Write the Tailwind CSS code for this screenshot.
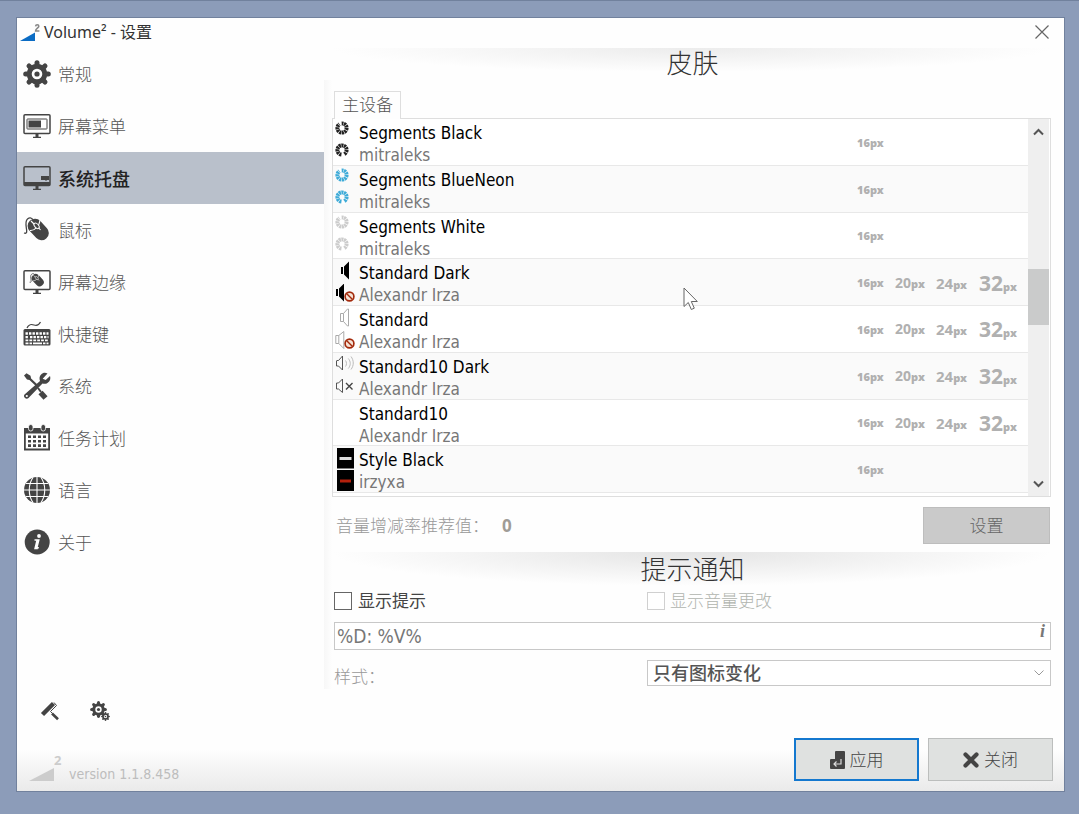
<!DOCTYPE html>
<html lang="zh-CN">
<head>
<meta charset="utf-8">
<title>Volume² - 设置</title>
<script src="https://cdn.jsdelivr.net/npm/@tailwindcss/browser@4"></script>
</head>
<body class="flex min-h-screen border-t border-[#71819d] bg-[#8c9cb9] pt-4 pr-[14px] pb-[22px] pl-4 font-['Noto_Sans','Noto_Sans_CJK_SC',sans-serif] text-[17px] leading-6 text-[#555]">

<svg class="hidden" aria-hidden="true">
  <symbol id="gear" viewBox="-14 -14 28 28">
    <circle r="7.8" fill="none" stroke="currentColor" stroke-width="5"/>
    <circle r="2.6" fill="currentColor"/>
    <g stroke="currentColor" stroke-width="5" stroke-linecap="round">
      <path id="tooth" d="M0-9V-11.3"/>
      <use href="#tooth" transform="rotate(45)"/><use href="#tooth" transform="rotate(90)"/><use href="#tooth" transform="rotate(135)"/><use href="#tooth" transform="rotate(180)"/><use href="#tooth" transform="rotate(225)"/><use href="#tooth" transform="rotate(270)"/><use href="#tooth" transform="rotate(315)"/>
    </g>
  </symbol>
  <symbol id="mouse" viewBox="0 0 28 28">
    <path d="M1 17c3 1 3-1 2.500-4S2 5 4.500 3 8 2 10 3.500" fill="none" stroke="currentColor" stroke-width="1.300"/>
    <rect x="8" y="1.500" width="14.500" height="24" rx="7" transform="rotate(-43 15.200 13.500)" fill="currentColor"/>
    <path d="M7 14.500c4 .5 9.500-4 10-10.500M8 5l4 4M15 11l2.500 3" fill="none" stroke="#fff" stroke-width="1.100"/>
    <ellipse cx="13.600" cy="9.800" rx="1.900" ry="3.300" transform="rotate(-43 13.600 9.800)" fill="currentColor" stroke="#fff"/>
  </symbol>
  <symbol id="screen" viewBox="0 0 28 28">
    <rect x="1" y="2.800" width="26" height="18.600" rx="1" fill="none" stroke="currentColor" stroke-width="1.500"/>
    <path d="M12.500 21.500h3v3.300h2.500v1.200h-8v-1.200h2.500z" fill="currentColor"/>
  </symbol>
  <symbol id="seg-up" viewBox="0 0 14 14">
    <circle cx="7" cy="7" r="4.600" fill="none" stroke="currentColor" stroke-width="4" stroke-dasharray="2.100 .528" pathLength="28.900"/>
    <path d="M6.500 6 1.500-1h5z" fill="#fff"/>
  </symbol>
  <symbol id="seg-down" viewBox="0 0 14 14">
    <circle cx="7" cy="7" r="4.600" fill="none" stroke="currentColor" stroke-width="4" stroke-dasharray="2.100 .528" pathLength="28.900"/>
    <path d="m7.200 8 4.300 7h-5z" fill="#fff"/>
  </symbol>
  <symbol id="ban" viewBox="0 0 12 12">
    <circle cx="6" cy="6" r="4.800" fill="#f5e3d6" stroke="#a32a0c" stroke-width="1.800"/>
    <path d="m3 3 6 6" stroke="#a32a0c" stroke-width="1.600"/>
  </symbol>
</svg>

<div class="flex flex-1 flex-col border border-[#71819d] bg-linear-to-t from-[#eaeaea] to-[#fefefe] to-[42px]">
  <header class="flex h-[30px] shrink-0 items-center pr-[15px] pb-[2px] pl-[3px]">
    <svg class="h-6 w-[21px] shrink-0" viewBox="0 0 21 24">
      <path d="M0 21 15 12.500V21z" fill="#0b6cc4"/>
      <path d="M15.600 6.300c.2-2 3.200-2 3.200 0 0 1.800-3.200 2.200-3.200 4.700h3.800" fill="none" stroke="#888" stroke-width="1.600"/>
    </svg>
    <h1 class="ml-[3px] flex-1 text-[16px] text-[#333]">Volume² - 设置</h1>
    <button type="button" aria-label="关闭窗口" class="text-[#666]">
      <svg class="size-[14px]" viewBox="0 0 14 14"><path d="M.5.5l13 13m0-13-13 13" fill="none" stroke="currentColor" stroke-width="1.200"/></svg>
    </button>
  </header>

  <div class="flex flex-1">
    <aside class="flex w-[307px] shrink-0 flex-col text-[#444]">
      <nav class="flex flex-col text-[17px] [&>a]:flex [&>a]:h-[52px] [&>a]:items-center [&>a]:gap-[7px] [&>a]:pl-[6px] [&_span]:pt-[2px] [&_span]:font-light [&_span]:text-[#555] [&_svg]:size-7">
        <a href="#general"><svg><use href="#gear"/></svg><span>常规</span></a>
        <a href="#osd">
          <svg viewBox="0 0 28 28"><use href="#screen"/><rect x="4" y="7" width="20" height="10" rx=".5" fill="none" stroke="currentColor" stroke-width="1"/><path d="M5.500 8.500H18v7H5.500z" fill="currentColor"/></svg>
          <span>屏幕菜单</span></a>
        <a href="#tray" aria-current="page" class="bg-[#b9c0cb]">
          <svg viewBox="0 0 28 28"><use href="#screen"/><path d="M1 18h26v3H1zM18 12h8v4h-2l-1 1-1-1h-4z" fill="currentColor"/></svg>
          <strong class="pt-[2px] text-[18px] font-medium text-[#222]">系统托盘</strong></a>
        <a href="#mouse-page"><svg><use href="#mouse"/></svg><span>鼠标</span></a>
        <a href="#edges">
          <svg viewBox="0 0 28 28"><use href="#screen"/><use href="#mouse" x="6" y="4.500" width="16" height="16"/></svg>
          <span>屏幕边缘</span></a>
        <a href="#hotkeys">
          <svg viewBox="0 0 28 28">
            <path d="M4 8c2-4 4-4 7-3s5 0 6.500-3" fill="none" stroke="currentColor" stroke-width="1.200"/>
            <rect x=".5" y="9" width="27" height="16.500" rx="1.500" fill="currentColor"/>
            <path d="M2.500 13.500h23" stroke="#fff" stroke-width="2.400" stroke-dasharray="2.400 1.100"/>
            <path d="M2.500 17.200h3.500m1 0h18.500" stroke="#fff" stroke-width="2.200" stroke-dasharray="2.400 1.100"/>
            <path d="M2.500 20.400h23" stroke="#fff" stroke-width="1.800" stroke-dasharray="2.800 1.100"/>
            <path d="M2.500 23.300h3m1 0h2.500m1 0h9m1 0h2.500m1 0h2" stroke="#fff" stroke-width="1.800"/>
          </svg>
          <span>快捷键</span></a>
        <a href="#system">
          <svg viewBox="0 0 28 28">
            <path d="M1 3.500 3.500 1.300l4 2.500.6 2.700L15 13l-1.600 1.500L6.500 8 4 7.500z" fill="currentColor"/>
            <path d="m17.500 20.500 5 5.500" stroke="currentColor" stroke-width="5.500"/>
            <path d="m15 16 3 4" stroke="currentColor" stroke-width="2"/>
            <path d="M24.500 1.500C20-1 15 3.500 17 9L1.500 22.500c-1 1.200-.5 2.500.5 3.500s2.500 1 3.500 0L19.500 11.500c5 1.500 9-3 7.500-7.500l-4.300 4-3-1.300z" fill="currentColor"/>
            <circle cx="3.800" cy="24" r="1.100" fill="#fff"/>
          </svg>
          <span>系统</span></a>
        <a href="#schedule">
          <svg viewBox="0 0 28 28">
            <path d="M1 4h26v22.500H1z" fill="currentColor"/><path d="M2.800 9.500h22.400v15H2.800z" fill="#fefefe"/>
            <path d="M5 12.800h19M5 17.200h19M5 21.600h19" stroke="currentColor" stroke-width="2.600" stroke-dasharray="3 2"/>
            <rect x="5.500" y=".5" width="4.500" height="6.500" rx="2.200" fill="currentColor" stroke="#fefefe" stroke-width=".8"/><rect x="18" y=".5" width="4.500" height="6.500" rx="2.200" fill="currentColor" stroke="#fefefe" stroke-width=".8"/>
          </svg>
          <span>任务计划</span></a>
        <a href="#language">
          <svg viewBox="0 0 28 28"><circle cx="14" cy="14" r="13" fill="currentColor"/>
            <path d="M14 1v26M1 14h26M3 7.500h22M3 20.500h22M10 1.500c-5 7-5 18 0 25M18 1.500c5 7 5 18 0 25" fill="none" stroke="#fefefe" stroke-width="1.100"/></svg>
          <span>语言</span></a>
        <a href="#about">
          <svg viewBox="0 0 28 28"><circle cx="14.200" cy="14" r="12.500" fill="currentColor"/>
            <circle cx="16" cy="8" r="1.900" fill="#fff"/><path d="M11.500 12h4.300l-2 7.800h2" fill="none" stroke="#fff" stroke-width="1.500"/><path d="m14.500 12-2 8.200h2.300" fill="none" stroke="#fff" stroke-width="2.200"/></svg>
          <span>关于</span></a>
      </nav>

      <div class="mt-auto flex gap-[30px] pl-[23px]">
        <button type="button" aria-label="皮肤">
          <svg class="size-5" viewBox="0 0 20 20"><path d="m2.500 13.500 11-11" stroke="currentColor" stroke-width="4.500"/><path d="m14 1.500 2.500 3-6 6 2 2" fill="none" stroke="currentColor"/><path d="m12 12.500 6 5.800" stroke="currentColor" stroke-width="2.600"/></svg>
        </button>
        <button type="button" aria-label="高级设置">
          <svg class="size-5" viewBox="0 0 20 20"><use href="#gear" width="17" height="17"/><use href="#gear" x="11" y="11" width="9" height="9"/></svg>
        </button>
      </div>

      <div class="mt-[27px] flex h-[43px] items-end pb-[5px] pl-[12px] text-[#bdbdbd]">
        <svg class="mb-[5px] h-[13px] w-[25px]" viewBox="0 0 25 13"><path d="M0 13 25 0v13z" fill="#ccc"/></svg>
        <sup class="top-0 w-[15px] self-start text-[13px] leading-6 font-bold text-[#ccc]">2</sup>
        <span class="font-['DejaVu_Sans_Condensed','Noto_Sans',sans-serif] text-[14px]">version 1.1.8.458</span>
      </div>
    </aside>

    <main class="flex min-w-0 flex-1 flex-col pr-[13px]">
      <div class="flex">
        <div class="mt-8 w-2 shrink-0 bg-linear-to-r from-[#f7f7f7] to-transparent"></div>
        <div class="min-w-0 flex-1">
          <section>
            <h2 class="h-[43px] bg-[radial-gradient(ellipse_50%_24px_at_50%_0,#ececec,transparent)] pl-[2px] text-center text-[26px] leading-[30px] font-light text-[#333]">皮肤</h2>
            <div role="tablist" class="flex pl-[2px]">
              <button type="button" role="tab" aria-selected="true" class="z-10 -mb-px h-7 border border-b-0 border-[#dedede] bg-[#fefefe] px-[7px] pb-[2px] text-[17px] font-light text-[#555]">主设备</button>
            </div>
            <div class="flex h-[379px] border border-[#dedede] bg-white">
              <div class="min-w-0 flex-1 overflow-hidden">
                <ul class="grid h-[374px] grid-rows-8 [&_b]:text-[11px] [&_b]:leading-none [&_p]:font-['DejaVu_Sans_Condensed','Noto_Sans',sans-serif] [&_p]:text-[17px] [&_p]:leading-[22px] [&>li]:flex [&>li]:min-h-0 [&>li]:border-b [&>li]:border-[#e8e8e8] [&>li:nth-child(even)]:bg-[#fafafa] [&>li>div:first-child]:flex [&>li>div:first-child]:w-[26px] [&>li>div:first-child]:flex-col [&>li>div:first-child]:pt-[2px] [&>li>div:first-child]:pl-[2px] [&>li>div:nth-child(2)]:flex-1 [&>li>div:nth-child(2)]:pt-[3px] [&>li>div:nth-child(3)]:grid [&>li>div:nth-child(3)]:grid-cols-[38px_41px_43px_49px] [&>li>div:nth-child(3)]:items-center [&>li>div:nth-child(3)]:pt-px [&>li>div:nth-child(3)]:font-bold [&>li>div:nth-child(3)]:text-[#b0b0b0] [&_p:first-child]:text-black [&_p:last-child]:text-[#777]">
                  <li>
                    <div class="gap-2 text-[#222]"><svg class="size-[14px]"><use href="#seg-up"/></svg><svg class="size-[14px]"><use href="#seg-down"/></svg></div>
                    <div><p>Segments Black</p><p>mitraleks</p></div>
                    <div><b>16px</b></div>
                  </li>
                  <li>
                    <div class="gap-2 text-[#3eabd8]"><svg class="size-[14px]"><use href="#seg-up"/></svg><svg class="size-[14px]"><use href="#seg-down"/></svg></div>
                    <div><p>Segments BlueNeon</p><p>mitraleks</p></div>
                    <div><b>16px</b></div>
                  </li>
                  <li>
                    <div class="gap-2 text-[#ccc]"><svg class="size-[14px]"><use href="#seg-up"/></svg><svg class="size-[14px]"><use href="#seg-down"/></svg></div>
                    <div><p>Segments White</p><p>mitraleks</p></div>
                    <div><b>16px</b></div>
                  </li>
                  <li>
                    <div class="gap-1"><svg class="h-[19px] w-5" viewBox="0 0 20 19"><path d="M6 6h2v7H6zM9 5.500l5-5v18l-5-5z" fill="#000"/></svg><svg class="h-[19px] w-5" viewBox="0 0 20 19"><path d="M1 5h2v7H1zM4 4.500l5-5v18l-5-5z" fill="#000"/><use href="#ban" x="9" y="7" width="11" height="11"/></svg></div>
                    <div><p>Standard Dark</p><p>Alexandr Irza</p></div>
                    <div><b>16px</b><span class="text-[14px]">20<b>px</b></span><span class="text-[15px]">24<b>px</b></span><span class="text-[21px]">32<b>px</b></span></div>
                  </li>
                  <li>
                    <div class="gap-1"><svg class="h-[19px] w-5" viewBox="0 0 20 19"><path d="M5.500 5.500h3v8h-3zM8.500 5.500l4-4.500h1v17h-1l-4-4.500" fill="none" stroke="#aaa"/></svg><svg class="h-[19px] w-5" viewBox="0 0 20 19"><path d="M.8 4.500h3v8h-3zM3.800 4.500l5-4v17l-5-5" fill="none" stroke="#aaa"/><use href="#ban" x="9" y="7" width="11" height="11"/></svg></div>
                    <div><p>Standard</p><p>Alexandr Irza</p></div>
                    <div><b>16px</b><span class="text-[14px]">20<b>px</b></span><span class="text-[15px]">24<b>px</b></span><span class="text-[21px]">32<b>px</b></span></div>
                  </li>
                  <li>
                    <div class="gap-[7px]"><svg class="h-4 w-5" viewBox="0 0 20 16"><path d="M1.500 6v5M1.500 5.500h2l4-4.500v14l-4-4h-2" fill="none" stroke="#555"/><path d="M10.500 5.500c1.300 1.500 1.300 4.500 0 6m2.800-8c2.600 3 2.600 7 0 10m2.700-12c3 4 3 9 0 13" fill="none" stroke="#bbb"/></svg><svg class="h-4 w-5" viewBox="0 0 20 16"><path d="M1.500 5v6M1.500 5h2l4-4v13.500L3.500 11h-2" fill="none" stroke="#555"/><path d="m11 5 6.500 6.500m0-6.500L11 11.500" stroke="#444" stroke-width="1.400"/></svg></div>
                    <div><p>Standard10 Dark</p><p>Alexandr Irza</p></div>
                    <div><b>16px</b><span class="text-[14px]">20<b>px</b></span><span class="text-[15px]">24<b>px</b></span><span class="text-[21px]">32<b>px</b></span></div>
                  </li>
                  <li>
                    <div></div>
                    <div><p>Standard10</p><p>Alexandr Irza</p></div>
                    <div><b>16px</b><span class="text-[14px]">20<b>px</b></span><span class="text-[15px]">24<b>px</b></span><span class="text-[21px]">32<b>px</b></span></div>
                  </li>
                  <li>
                    <div><svg class="h-[43px] w-5" viewBox="0 0 20 43"><path d="M2 0h17v20.500H2zM2 22h17v21H2z" fill="#000"/><path d="M4.500 9h12v3h-12z" fill="#ddd"/><path d="M5 31.500h11v3H5z" fill="#b3200c"/></svg></div>
                    <div><p>Style Black</p><p>irzyxa</p></div>
                    <div><b>16px</b></div>
                  </li>
                </ul>
              </div>
              <div class="mr-px flex w-[21px] shrink-0 flex-col items-center bg-[#efefef] text-[#555]">
                <button type="button" aria-label="向上滚动" class="flex h-[26px] w-full items-center justify-center"><svg class="h-2 w-[11px]" viewBox="0 0 11 8"><path d="m1 6.500 4.500-4.500L10 6.500" fill="none" stroke="currentColor" stroke-width="2"/></svg></button>
                <div class="mt-[124px] h-14 w-full bg-[#cacbcb]"></div>
                <button type="button" aria-label="向下滚动" class="mt-auto flex h-6 w-full items-center justify-center"><svg class="h-2 w-[11px]" viewBox="0 0 11 8"><path d="m1 1.500 4.500 4.500L10 1.500" fill="none" stroke="currentColor" stroke-width="2"/></svg></button>
              </div>
            </div>
            <div class="flex items-center py-[10px] pr-px pb-2 pl-1 text-[#b0b0b0]">
              <span class="font-light text-[#999]">音量增减率推荐值：</span>
              <output class="ml-[13px] font-bold text-[#a09c96]">0</output>
              <button type="button" disabled class="ml-auto h-[37px] w-[127px] border border-[#bdbdbd] bg-[#cacaca] font-light text-[#666]">设置</button>
            </div>
          </section>

          <section>
            <h2 class="h-10 bg-[radial-gradient(ellipse_50%_34px_at_50%_0,#e4e4e4,transparent)] pl-[2px] text-center text-[26px] leading-[35px] font-light text-[#333]">提示通知</h2>
            <div class="grid grid-cols-[313px_1fr] pl-[2px] leading-[18px] text-[#444]">
              <label class="flex items-center gap-[6px]"><input type="checkbox" class="size-[18px] appearance-none border border-[#666] bg-white">显示提示</label>
              <label class="flex items-center gap-[5px] font-light text-[#b0b4ae]"><input type="checkbox" disabled class="size-[18px] appearance-none border border-[#d0d0d0] bg-white">显示音量更改</label>
            </div>
            <div class="mt-3 ml-[2px] flex h-7 border border-[#c8c8c8] bg-white">
              <input type="text" aria-label="提示格式" value="%D: %V%" class="min-w-0 flex-1 pl-[2px] font-['DejaVu_Sans_Condensed','Noto_Sans',sans-serif] text-[19px] text-[#777] outline-none">
              <button type="button" aria-label="格式说明" class="self-start pr-[5px] font-['Liberation_Serif',serif] text-[18px] leading-[17px] font-bold text-[#777] italic">i</button>
            </div>
            <div class="mt-[10px] grid grid-cols-[313px_1fr] pl-[2px]">
              <label for="style" class="pt-[5px] font-light text-[#999]">样式：</label>
              <div class="relative">
                <select id="style" class="h-[26px] w-full appearance-none border border-[#c8c8c8] bg-white pl-[5px] text-[18px] font-medium text-[#555]"><option>只有图标变化</option></select>
                <svg class="pointer-events-none absolute top-[10px] right-[7px] h-[6px] w-[10px]" viewBox="0 0 10 6"><path d="m.5.5L5 5 9.500.5" fill="none" stroke="#999"/></svg>
              </div>
            </div>
          </section>
        </div>
      </div>

      <div class="-mr-[2px] mt-auto flex justify-end gap-[9px] pb-[10px] font-light text-[#444]">
        <button type="button" class="flex h-[43px] w-[125px] items-center justify-center gap-[5px] border-2 border-[#1478cf] bg-[#dfe1e0]">
          <svg class="h-[18px] w-[15px]" viewBox="0 0 15 18"><path d="M6 0h8q1 0 1 1v16q0 1-1 1H1q-1 0-1-1V9q0-1 1-1h4V1q0-1 1-1z" fill="#444"/><path d="M11 8v5H4m2.500-2.500L4 13l2.500 2.500" fill="none" stroke="#ddd" stroke-width="1.200"/></svg>应用</button>
        <button type="button" class="flex h-[43px] w-[125px] items-center justify-center gap-[5px] border border-[#bcbebd] bg-[#dfe1e0]">
          <svg class="size-4" viewBox="0 0 16 16"><path d="m2.500 2.500 11 11m0-11-11 11" stroke="#444" stroke-width="4.200" stroke-linecap="round"/></svg>关闭</button>
      </div>
    </main>
  </div>
</div>

<svg class="pointer-events-none absolute top-[287px] left-[683px] z-20 h-6 w-4" viewBox="0 0 16 24" aria-hidden="true"><path d="M1 1v18.500l4.300-4 3 7 3-1.300-3-6.700h6z" fill="#fff" stroke="#666"/></svg>
</body>
</html>
